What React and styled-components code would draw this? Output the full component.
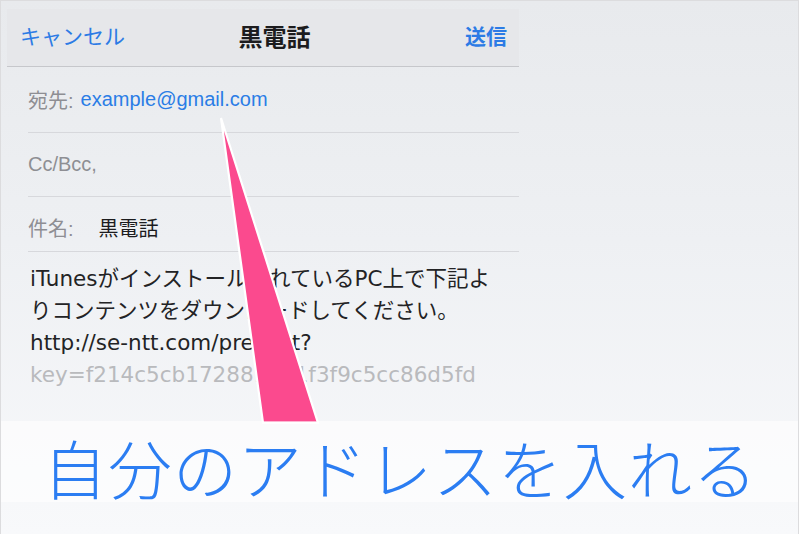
import React from "react";
import styled, { createGlobalStyle } from "styled-components";

const Global = createGlobalStyle`
  html, body { margin: 0; padding: 0; background: #ffffff; }
  body { font-family: "Liberation Sans", "Noto Sans CJK JP", sans-serif; }
  * { box-sizing: border-box; }
`;

const Frame = styled.div`
  position: relative;
  width: 799px;
  height: 534px;
  border: 1px solid #dcdcde;
  border-bottom: none;
  background: linear-gradient(180deg, #e8eaed 0%, #eef0f3 45%, #f8f9fb 100%);
  display: flex;
  flex-direction: column;
  overflow: hidden;
`;

const Panel = styled.div`
  margin: 8px 0 0 6px;
  width: 512px;
  height: 412px;
  display: flex;
  flex-direction: column;
`;

const Header = styled.div`
  height: 58px;
  background: #e6e7ea;
  border-bottom: 1px solid #c6c7cb;
  display: flex;
  align-items: center;
  justify-content: space-between;
  padding: 0 12px 5px 13px;
`;

const NavButton = styled.span`
  font-family: "Noto Sans CJK JP", sans-serif;
  font-size: 21px;
  font-weight: ${(p) => (p.$bold ? 700 : 400)};
  color: #2c7be5;
  width: 110px;
  text-align: ${(p) => (p.$right ? "right" : "left")};
`;

const Title = styled.span`
  font-family: "Noto Sans CJK JP", sans-serif;
  font-size: 24px;
  font-weight: 700;
  color: #1c1c1e;
  margin-left: 22px;
`;

const Fields = styled.div`
  padding-left: 21px;
  display: flex;
  flex-direction: column;
`;

const Row = styled.div`
  height: ${(p) => p.$h}px;
  border-bottom: 1px solid #d7d8dc;
  display: flex;
  align-items: center;
  gap: ${(p) => p.$gap || 0}px;
  padding-top: ${(p) => p.$pt || 0}px;
  font-size: 20px;
`;

const Label = styled.span`
  color: #8e8e93;
`;

const Value = styled.span`
  color: ${(p) => (p.$link ? "#2a7de6" : "#1c1c1e")};
  font-family: ${(p) =>
    p.$cjk ? '"Noto Sans CJK JP", sans-serif' : 'inherit'};
`;

const Body = styled.div`
  padding: 11px 0 0 23px;
  font-family: "DejaVu Sans", "Noto Sans CJK JP", sans-serif;
  font-size: 21.5px;
  line-height: 32px;
  color: #232325;
`;

const Line = styled.div`
  white-space: nowrap;
  color: ${(p) => (p.$faded ? "#b9babd" : "inherit")};
`;

const Caption = styled.div`
  height: 81px;
  background: rgba(255, 255, 255, 0.6);
  display: flex;
  align-items: center;
  justify-content: center;
  padding: 8px 0 0 2px;
  font-family: "Noto Sans CJK JP", sans-serif;
  font-weight: 300;
  font-size: 64px;
  color: #2b7df2;
  letter-spacing: 1px;
  position: relative;
  z-index: 2;
`;

const Pointer = styled.svg`
  position: absolute;
  left: -1px;
  top: -1px;
  width: 800px;
  height: 534px;
  pointer-events: none;
  z-index: 1;
`;

export default function App() {
  return (
    <>
      <Global />
      <Frame>
        <Panel>
          <Header>
            <NavButton>キャンセル</NavButton>
            <Title>黒電話</Title>
            <NavButton $right $bold>送信</NavButton>
          </Header>
          <Fields>
            <Row $h={66} $gap={7}>
              <Label>宛先:</Label>
              <Value $link>example@gmail.com</Value>
            </Row>
            <Row $h={64}>
              <Label>Cc/Bcc,</Label>
            </Row>
            <Row $h={55} $pt={7} $gap={25}>
              <Label>件名:</Label>
              <Value $cjk>黒電話</Value>
            </Row>
          </Fields>
          <Body>
            <Line>iTunesがインストールされているPC上で下記よ</Line>
            <Line>りコンテンツをダウンロードしてください。</Line>
            <Line>http://se-ntt.com/present?</Line>
            <Line $faded>key=f214c5cb172881551f3f9c5cc86d5fd</Line>
          </Body>
        </Panel>
        <Caption>自分のアドレスを入れる</Caption>
        <Pointer viewBox="0 0 800 534">
          <polygon
            points="221,118 263,423 318,423"
            fill="#fb4a8e"
            stroke="#ffffff"
            strokeWidth="2.2"
            strokeLinejoin="miter"
          />
        </Pointer>
      </Frame>
    </>
  );
}
